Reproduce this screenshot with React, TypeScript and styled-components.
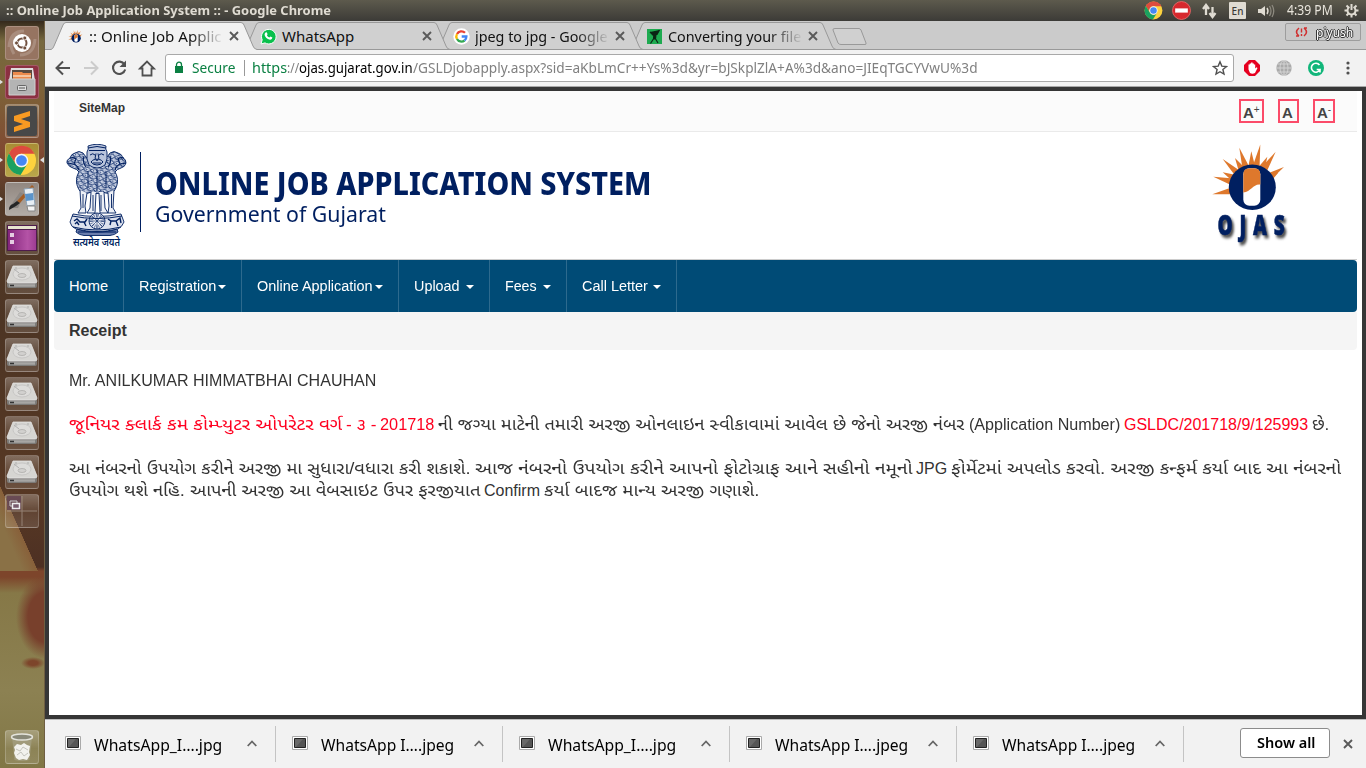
import React, { useLayoutEffect, useRef, useState } from 'react';
import styled, { createGlobalStyle } from 'styled-components';

const GlobalStyle = createGlobalStyle`
  * { box-sizing: border-box; }
  body { margin: 0; background: #fff; overflow: hidden; }
  svg { display: block; flex: none; }
`;

const uiFont = `'Noto Sans', 'Open Sans', sans-serif`;
const pageFont = `'Liberation Sans', 'Noto Sans Gujarati', 'Lohit Gujarati', sans-serif`;
const navy = '#001f60';

/* Text condensed or stretched to a fixed width */
const FitBox = styled.span<{ $w: number }>`
  display: inline-block;
  flex: none;
  width: ${p => p.$w}px;
  white-space: pre;
`;
const FitInner = styled.span`
  display: inline-block;
  transform-origin: 0 50%;
`;
function Fit({ w, children }: { w: number; children: React.ReactNode }) {
  const ref = useRef<HTMLSpanElement>(null);
  const [scale, setScale] = useState(1);
  useLayoutEffect(() => {
    if (ref.current) setScale(w / ref.current.offsetWidth);
  }, [w]);
  return (
    <FitBox $w={w}>
      <FitInner ref={ref} style={{ transform: `scaleX(${scale})` }}>{children}</FitInner>
    </FitBox>
  );
}

const Screen = styled.div`
  width: 1366px;
  height: 768px;
  display: flex;
  flex-direction: column;
  overflow: hidden;
  font-family: ${uiFont};
`;
const Panel = styled.header`
  height: 21px;
  flex: none;
  display: flex;
  align-items: center;
  justify-content: space-between;
  padding: 0 7px 0 6px;
  color: #dfdbd2;
  background: linear-gradient(#5d5a4d, #3c3b37);
`;
const PanelTitle = styled.div`
  font-size: 12.5px;
  line-height: 20px;
  font-weight: 700;
`;
const Indicators = styled.div`
  display: flex;
  align-items: center;
  font-size: 13.5px;
  line-height: 20px;
`;
const Slot = styled.span<{ $ml?: number }>`
  display: flex;
  margin-left: ${p => p.$ml ?? 0}px;
`;
const Clock = styled.span`
  margin: 0 11px 2px 12px;
  color: #e8e4db;
`;
const Lang = styled.span`
  width: 17px;
  height: 17px;
  margin-left: 11px;
  border-radius: 1px;
  background: #dfdbd2;
  color: #3c3b37;
  font-size: 10px;
  line-height: 18px;
  font-weight: 500;
  text-align: center;
`;
const Desktop = styled.div`
  flex: 1;
  display: flex;
  min-height: 0;
`;

const Launcher = styled.aside`
  width: 45px;
  flex: none;
  display: flex;
  flex-direction: column;
  align-items: center;
  gap: 5px;
  padding: 5px 1px 4px 0;
  border-right: 1px solid #6f5f42;
  background:
    radial-gradient(ellipse 12px 6px at 33px 642px, #7d452b 40%, transparent) no-repeat,
    radial-gradient(ellipse 30px 42px at 46px 596px, #78402c 60%, transparent 100%) no-repeat,
    linear-gradient(66deg, #8a7146 0 30%, #88603a 50%, transparent 50.5%) 0 466px / 38px 84px no-repeat,
    linear-gradient(#35291c 0, #76683e 20px, #7d6238 70px, #804a32 130px, #543a27 175px, #4d3524 300px, #573824 480px, #4d3023 546px, #7d452b 550px, #7d452b 556px, #867847 572px, #8c8152 670px, #817746 747px);
`;
const Tile = styled.div<{ $bg?: string; $last?: boolean }>`
  width: 34px;
  height: 34px;
  flex: none;
  display: flex;
  align-items: center;
  justify-content: center;
  position: relative;
  margin-top: ${p => (p.$last ? 'auto' : 0)};
  border: 1px solid rgba(255, 255, 255, 0.2);
  border-radius: 3px;
  background: ${p => p.$bg ?? 'linear-gradient(rgba(255,255,255,.27), rgba(255,255,255,.07) 55%, rgba(255,255,255,.13))'};
`;
const Pip = styled.i<{ $right?: boolean }>`
  position: absolute;
  top: 13px;
  ${p => (p.$right ? 'right: -6px; border-right: 4px solid #ddd;' : 'left: -7px; border-left: 4px solid #ddd;')}
  border-top: 3px solid transparent;
  border-bottom: 3px solid transparent;
`;

const Browser = styled.main`
  flex: 1;
  min-width: 0;
  display: flex;
  flex-direction: column;
`;
const TabStrip = styled.div`
  height: 29px;
  flex: none;
  display: flex;
  padding: 1px 5px 0 6px;
  background: linear-gradient(#999, #999) 0 28px / 100% 1px no-repeat, #cbcbcb;
`;
const TabBox = styled.div<{ $z: number }>`
  position: relative;
  z-index: ${p => p.$z};
  width: 206px;
  height: 28px;
  margin-right: -13px;
  flex: none;
  display: flex;
  align-items: center;
  padding: 0 16px 0 16px;
`;
const TabShape = styled.svg`
  position: absolute;
  left: 0;
  top: 0;
  z-index: -1;
`;
const TabIcon = styled.span`
  width: 17px;
  display: flex;
  justify-content: center;
`;
const TabTitle = styled.div<{ $faded?: boolean }>`
  width: 135px;
  margin: 0 0 1px 5px;
  font-size: 15px;
  line-height: 22px;
  color: #111;
  ${p => p.$faded && 'mask-image: linear-gradient(90deg, #000 75%, transparent);'}
`;
const NewTab = styled.div`
  margin: 6px 0 0 9px;
`;
const Profile = styled.div`
  width: 76px;
  height: 18px;
  margin: 1px 0 0 auto;
  display: flex;
  align-items: center;
  justify-content: space-between;
  padding: 0 7px 0 9px;
  border: 1px solid #9d9d9d;
  border-radius: 2px;
  background: #c8c8c8;
  color: #fff;
  font-size: 13px;
  line-height: 15px;
  text-shadow: 0 1px #333, 1px 0 #333, -1px 0 #333, 0 -1px #333;
`;
const Toolbar = styled.div`
  height: 37px;
  flex: none;
  display: flex;
  align-items: center;
  padding: 0 10px 1px 8px;
  border-bottom: 1px solid #a8a8a8;
  background: #f2f2f2;
`;
const NavIcons = styled.div`
  display: flex;
  gap: 8px;
  width: 112px;
`;
const Omnibox = styled.div`
  width: 1069px;
  height: 28px;
  display: flex;
  align-items: center;
  padding: 0 5px 0 8px;
  border: 1px solid #a9a9a9;
  border-radius: 3px;
  background: #fff;
  color: #808080;
  font-size: 14px;
  line-height: 24px;
`;
const Green = styled.span`color: #0b8043;`;
const Host = styled.span`color: #000;`;
const Divider = styled.i`
  width: 1px;
  height: 16px;
  margin: 0 7px 0 9px;
  background: #999;
`;
const Extensions = styled.div`
  display: flex;
  align-items: center;
  gap: 16px;
  margin-left: 10px;
`;

const Viewport = styled.div`
  flex: 1;
  min-height: 0;
  display: flex;
  flex-direction: column;
  padding: 0 5px;
  border: 4px solid #363636;
  background: #fff;
  font-family: ${pageFont};
  color: #333;
`;
const UtilityBar = styled.div`
  height: 41px;
  flex: none;
  display: flex;
  justify-content: space-between;
  padding: 8px 22px 0 25px;
  border-bottom: 1px solid #eaeaea;
  background: #fbfbfb;
`;
const SiteMap = styled.a`
  font-size: 12px;
  line-height: 18px;
  font-weight: 700;
`;
const Sizes = styled.div`
  display: flex;
  gap: 14px;
`;
const SizeButton = styled.a<{ $w: number }>`
  width: ${p => p.$w}px;
  height: 24px;
  padding-left: 2px;
  border: 2px solid #fb4b69;
  font-size: 15px;
  line-height: 24px;
  font-weight: 700;
  color: #444;
  display: flex;
`;
const Sup = styled.span`
  font-size: 10px;
  line-height: 17px;
  font-weight: 400;
`;
const Banner = styled.div`
  height: 128px;
  flex: none;
  display: flex;
  padding: 12px 62px 0 11px;
  border-bottom: 1px solid #ccc;
`;
const BrandRule = styled.i`
  width: 1px;
  height: 80px;
  margin: 8px 14px 0 12px;
  background: ${navy};
`;
const BrandText = styled.div`
  flex: 1;
  padding-top: 20px;
  color: ${navy};
  font-family: ${uiFont};
`;
const BrandName = styled.div`
  font-size: 32px;
  line-height: 38px;
  font-weight: 800;
`;
const BrandSub = styled.div`
  font-size: 22.5px;
  line-height: 24px;
`;
const Menu = styled.nav`
  height: 52px;
  flex: none;
  display: flex;
  border-radius: 4px;
  background: #004b76;
`;
const MenuItem = styled.a<{ $w: number }>`
  width: ${p => p.$w}px;
  height: 52px;
  display: flex;
  align-items: center;
  padding-left: 15px;
  border-right: 1px solid #2d6a8e;
  color: #fff;
  font-size: 14.7px;
`;
const Caret = styled.i<{ $gap: number }>`
  margin: 2px 0 0 ${p => p.$gap}px;
  border-top: 4px solid #fff;
  border-left: 4px solid transparent;
  border-right: 4px solid transparent;
`;
const Heading = styled.h1`
  height: 38px;
  flex: none;
  margin: 0;
  padding-left: 15px;
  border-radius: 0 0 4px 4px;
  background: #f5f5f5;
  font-size: 16px;
  line-height: 37px;
`;
const Receipt = styled.section`
  padding: 20px 0 0 15px;
  font-size: 16px;
`;
const Line = styled.div<{ $gap?: boolean }>`
  height: 22px;
  margin-bottom: ${p => (p.$gap ? 22 : 0)}px;
  line-height: 22px;
  display: flex;
  gap: 4px;
`;
const Red = styled.span`
  display: flex;
  gap: 4px;
  color: #ff0020;
`;

const Downloads = styled.footer`
  height: 49px;
  flex: none;
  display: flex;
  align-items: center;
  padding: 0 13px 0 4px;
  border-top: 1px solid #bcbcbc;
  background: #f2f2f2;
  color: #000;
`;
const Download = styled.div`
  width: 227px;
  height: 36px;
  display: flex;
  align-items: center;
  padding: 0 0 2px 16px;
  border-right: 1px solid #c4c4c4;
  font-size: 15.5px;
  line-height: 22px;
`;
const FileName = styled.div`
  width: 153px;
  margin: 3px 0 0 13px;
`;
const ShowAll = styled.button`
  width: 90px;
  height: 30px;
  margin: 0 0 2px auto;
  padding: 0;
  border: 1px solid #8c8c8c;
  border-radius: 3px;
  background: #fff;
  color: #000;
  font: 600 14px/26px ${uiFont};
`;

const Cross = ({ s = 10, c = '#5a5a5a' }) => (
  <svg width={s} height={s} viewBox="0 0 10 10"><path d="M1 1l8 8M9 1L1 9" stroke={c} strokeWidth="1.900" /></svg>
);

const Chrome = ({ s }: { s: number }) => (
  <svg width={s} height={s} viewBox="0 0 32 32">
    <circle cx="16" cy="16" r="15" fill="#fdd23e" />
    <path d="M3 8.500A15 15 0 0 1 29.500 9L16 9A7 7 0 0 0 9.800 19.500z" fill="#dd4b3e" />
    <path d="M3 8.500A15 15 0 0 0 15 31L22 19.600A7 7 0 0 1 9.900 19.500z" fill="#1aa160" />
    <circle cx="16" cy="16" r="7" fill="#f4f4f4" />
    <circle cx="16" cy="16" r="5.500" fill="#4587f3" />
  </svg>
);

/* Ray tips around the sun disc, centred on (41.3, 43.3) */
const rayTips = [[1.3, 50.3], [2.3, 32.7], [11.7, 28.3], [11.7, 15], [24, 14], [28.3, 3.7], [40.3, 7.3], [49.3, 0.5], [64.7, 7.7], [56.3, 12.7], [73, 23], [67, 29]];
const rayPath = ([x, y]: number[]) => {
  const dx = x - 41.3, dy = y - 43.3, d = Math.hypot(dx, dy);
  const ux = dx / d, uy = dy / d, bx = 41.3 + ux * 20, by = 43.3 + uy * 20, h = 3.6;
  return `M${bx - uy * h} ${by + ux * h}L${x} ${y}L${bx + uy * h} ${by - ux * h}z`;
};
const SunMark = () => (
  <>
    {rayTips.map((t, i) => <path key={i} d={rayPath(t)} fill="#de782c" />)}
    <ellipse cx="41.300" cy="43.300" rx="23.500" ry="22.700" fill={navy} />
    <rect x="32.300" y="24.300" width="17" height="37.400" rx="6" fill="#fff" />
    <path d="M32.300 48.500V30.300q0-6 6-6h5q6 0 6 6v10.200c-7-1-9 7-17 8z" fill="#de782c" />
  </>
);
const Sun = ({ s }: { s: number }) => (
  <svg width={s} height={s} viewBox="0 -3 76 76"><SunMark /></svg>
);

const OjasText = styled.text`
  font: 800 28px 'Open Sans', sans-serif;
  filter: drop-shadow(3px 3px 1.5px rgba(0, 0, 0, 0.7));
`;
const OjasLogo = () => (
  <svg width="84" height="108" viewBox="0 0 84 108">
    <SunMark />
    <OjasText transform="translate(6.500 90.500) scale(.68 1)" fill={navy} stroke={navy} strokeWidth=".6" textLength="99">OJAS</OjasText>
  </svg>
);

const Emblem = () => (
  <svg width="62" height="112" viewBox="0 0 62 112">
    <defs>
      <pattern id="mane" width="7" height="6" patternUnits="userSpaceOnUse" patternTransform="rotate(12)">
        <rect width="7" height="6" fill="#d3daea" />
        <path d="M0 1q2 2 3.500 0t3.500 0M0 4q1.500-2 3 0t4 0M1 2.500l1.500 1M5 2l-1 1.500M2 5.500l1-1M6 5.500l-1-1" fill="none" stroke={navy} strokeWidth=".9" />
      </pattern>
    </defs>
    <g stroke={navy} strokeWidth=".9" fill="url(#mane)">
      <path d="M17 9q-4-3-8 0q-4 1-5 5q-4 2-3 5q2 4 6 5q4 1 6 4c-4 6-3 14 1 19q6 4 11 1q6 3 12 0q6 3 11-1c4-5 5-13 1-19q2-3 6-4q4-1 5-5q0-4-3-5q-1-4-5-5q-4-3-8 0q-3 5-6 6H23q-3-1-6-6z" />
      <path d="M22 2q9-3.500 18 0q-1 3 1 6q1 7-2 13q-8 6-16 0q-3-6-2-13q2-3 1-6z" fill="#bac5dc" />
      <path d="M14 46l1 18-3 5h8l-1-7 2-13M25 48l-1 16-3 5h8l1-20h3l1 20h8l-3-5-1-16M42 49l1 13-1 7h8l-3-5 1-18" fill="#edf0f6" />
      <path d="M7 70q24 5 48 0l3 8q-2 5-6 7q-21 5-42 0q-5-2-6-7z" fill="#dce1ed" />
      <path d="M11 85c9 4 31 4 40 0l1 3q-3 3-8 3.500H18q-5-.5-8-3.500z" fill="#697cab" />
      <circle cx="31" cy="77" r="8" fill="#f3f5fa" />
    </g>
    <g fill="none" stroke={navy}>
      <path d="M22 4q9-3 18 0M23 6.500h16M24 11q3-2.500 5 0M33 11q2-2.500 5 0M30 9.500l-1 5 2 1 2-1-1-5M25 18q3-4 6-1.500q3-2.500 6 1.500q-2 3-6 3t-6-3M27 19h8" strokeWidth="1" />
      <path d="M2 19l5 1M4 14q4-1 6 1l-2 5q4 2 5 6M60 19l-5 1M58 14q-4-1-6 1l2 5q-4 2-5 6M18 12q-2 6 2 11M44 12q2 6-2 11" strokeWidth="1.100" />
      <path d="M17 50v14M45.500 50v14M27 51v16M35 51v16M22 27v17M40 27v17M31 25v22" strokeWidth=".9" />
      <path d="M6 72q25 5 50 0M7 83q24 6 48 0M12 88h38" strokeWidth="1" />
      <path d="M8 77l3-2 3 3h5l2-3M9 80l2-2 2 3M18 78l2 4M42 75l3 2h5l4-3 1 5M44 81l1-4M50 77l2 5" strokeWidth="1.400" />
      <circle cx="31" cy="77" r="5.500" strokeDasharray="1 1" strokeWidth="3.500" opacity=".55" />
      <path d="M31 69v16M23 77h16M25.500 71.500l11 11M36.500 71.500l-11 11" strokeWidth=".6" />
    </g>
    <text x="7" y="102" fontSize="10.500" fontWeight="600" fill={navy} textLength="47" lengthAdjust="spacingAndGlyphs" fontFamily="'Noto Sans Devanagari', 'Lohit Devanagari', sans-serif">सत्यमेव जयते</text>
  </svg>
);

const HardDisk = () => (
  <svg width="32" height="26" viewBox="0 0 32 26">
    <path d="M7 3h18l6 15v4q0 2-2 2H3q-2 0-2-2v-4z" fill="#7d7b78" />
    <path d="M7 2h18l6 15q0 2-2 2H3q-2 0-2-2z" fill="#d6d5d2" stroke="#e6e5e3" strokeWidth=".8" />
    <ellipse cx="16" cy="10" rx="9" ry="6" fill="#dddcda" stroke="#c3c2c0" strokeWidth=".8" />
    <ellipse cx="16" cy="11.500" rx="4" ry="2" fill="#d2d1cf" stroke="#aeadab" strokeWidth=".8" />
    <path d="M8 5l5 4M9 4h2M21 4h2" stroke="#aaa" strokeWidth=".9" />
    <path d="M3 21.500h26" stroke="#a7a6a4" strokeWidth="2.500" />
    <path d="M4 21.500h4" stroke="#333" strokeWidth="1.500" />
  </svg>
);

const UbuntuIcon = () => (
  <svg width="32" height="32" viewBox="0 0 32 32">
    <path d="M3 20Q4 4 18 4M8 27Q0 14 14 7M29 12Q28 28 14 28" fill="none" stroke="#fff" strokeWidth="3" opacity=".18" />
    <circle cx="16" cy="16" r="9" fill="#fff" />
    <circle cx="16" cy="16" r="4.500" fill="none" stroke="#70503f" strokeWidth="2" />
    <g fill="#70503f" stroke="#fff" strokeWidth=".8"><circle cx="10.500" cy="16" r="2" /><circle cx="18.800" cy="11" r="2" /><circle cx="18.800" cy="21" r="2" /></g>
  </svg>
);
const FilesIcon = () => (
  <svg width="28" height="30" viewBox="0 0 28 30">
    <path d="M3 1h22l2 13H1z" fill="#dedede" /><path d="M4 3h20v10H4z" fill="#59493f" />
    <path d="M5 5h9l1 1h8v8H5z" fill="#ed8a4c" /><path d="M5 8h18v2H5z" fill="#f5c49f" />
    <path d="M1 12h26v16H1z" fill="#b4b4b4" stroke="#d0d0d0" />
    <rect x="9.500" y="18.500" width="9" height="5" rx="1" fill="#ddd" stroke="#666" /><path d="M11 21h6" stroke="#555" />
  </svg>
);
const SublimeIcon = () => (
  <svg width="30" height="30" viewBox="0 0 30 30">
    <rect width="30" height="30" rx="2" fill="#484848" />
    <path d="M7 10l16-5v5l-9 3 9 3v5L7 26v-5l9-3-9-3z" fill="#f89a22" />
  </svg>
);
const PaintIcon = () => (
  <svg width="32" height="32" viewBox="0 0 32 32">
    <path d="M3 25l11-16 4 2-6 14z" fill="#8b8682" />
    <path d="M26 2l2 2-14 16-3-2z" fill="#a45d25" /><path d="M11 18l3 2-4 3-7 4q0-5 4-6z" fill="#252525" />
    <path d="M18 6l9-1 2 17-8 1z" fill="#e8eef4" stroke="#8ea2b4" /><path d="M19 11l8-1 .7 7-7.700 1z" fill="#5b94ca" /><path d="M21 23h8v5h-7z" fill="#f4f4f4" stroke="#888" />
  </svg>
);
const WindowIcon = () => (
  <svg width="30" height="26" viewBox="0 0 30 26">
    <defs><linearGradient id="plum" x2="1"><stop stopColor="#84267c" /><stop offset=".7" stopColor="#b453a6" /><stop offset="1" stopColor="#9d3c92" /></linearGradient></defs>
    <rect width="30" height="26" fill="#4e1b4d" /><path d="M1 1h28v3H1z" fill="#e7e3cf" /><path d="M1 5h28v20H1z" fill="url(#plum)" />
    <path d="M3 8h4v4H3zM3 15h4v4H3z" fill="#e5cde1" />
  </svg>
);
const WorkspaceIcon = () => (
  <svg width="32" height="32" viewBox="0 0 32 32">
    <path d="M1 1h14v14H1z" fill="#644452" opacity=".8" /><path d="M16 1v30M1 16h30" stroke="#b5a79c" opacity=".6" />
    <path d="M4 6h7v5H4z" fill="none" stroke="#ccc" /><path d="M6.500 8.500h7v5h-7z" fill="#775b6c" stroke="#eee" strokeWidth="1.500" />
  </svg>
);
const TrashIcon = () => (
  <svg width="26" height="30" viewBox="0 0 26 30">
    <path d="M3 5h20l-2.500 23q-7.500 2-15 0z" fill="#a5a184" opacity=".7" />
    <path d="M5 15l3-3 4 1 3-2 3 2 3 1-1 6 1 3-3 5-4-1-4 1-3-2-2-5 1-3z" fill="#f2f2ed" /><path d="M7 17l4 2 3-4 5 3M8 23l4-3 3 4 4-3" fill="none" stroke="#c4c4bc" />
    <ellipse cx="13" cy="5" rx="10.500" ry="3" fill="#898979" stroke="#e4e4dc" strokeWidth="1.500" />
  </svg>
);

const WhatsApp = () => (
  <svg width="17" height="17" viewBox="0 0 17 17">
    <path d="M1 16l1.200-4.200A7.300 7.300 0 1 1 5 14.900z" fill="#09c04c" stroke="#fff" />
    <path d="M5.500 4.500l1.200-.2.900 2-.7 1q.8 1.600 2.500 2.300l1-1 2 1q-.2 2-2 2.100C7 11.400 4.500 8.500 4.600 6z" fill="#fff" />
  </svg>
);
const Google = () => (
  <svg width="17" height="17" viewBox="0 0 17 17">
    <circle cx="8.500" cy="8.500" r="8.200" fill="#fff" />
    <g fill="none" strokeWidth="2.300">
      <path d="M12 4.800A5 5 0 0 0 4 6" stroke="#ea4335" /><path d="M4 6a5 5 0 0 0 0 5" stroke="#fbbc05" />
      <path d="M4 11a5 5 0 0 0 7.500 1.500" stroke="#34a853" /><path d="M11.500 12.500a5 5 0 0 0 1.900-4H8.700" stroke="#4285f4" />
    </g>
  </svg>
);
const Runner = () => (
  <svg width="15" height="15" viewBox="0 0 15 15">
    <path d="M0 0h15v15H0z" fill="#1eaa50" /><circle cx="8.500" cy="3.500" r="1.300" fill="#0b2415" />
    <path d="M3 3l3 3 4-.5L12.500 1M7 5h2l-.5 5H6.500zM8 9l3 5M7 9l-3.500 5.500" stroke="#0b2415" strokeWidth="1.200" fill="#0b2415" />
  </svg>
);

type TabProps = { icon: React.ReactNode; title: string; w: number; faded?: boolean; active?: boolean; z: number };
const Tab = ({ icon, title, w, faded, active, z }: TabProps) => (
  <TabBox $z={z}>
    <TabShape width="206" height="28" viewBox="0 0 206 28">
      <path d="M0 27.500Q2 27 3 24L12 3Q13 .5 15 .5H190Q192 .5 193 3L202 24Q203 27 206 27.500V28H0z" fill={active ? '#f2f2f2' : '#d0d0d0'} />
      <path d="M0 27.500Q2 27 3 24L12 3Q13 .5 15 .5H190Q192 .5 193 3L202 24Q203 27 206 27.500" fill="none" stroke="#999" />
      {!active && <path d="M0 27.500H206" stroke="#999" />}
    </TabShape>
    <TabIcon>{icon}</TabIcon>
    <TabTitle $faded={faded}><Fit w={w}>{title}</Fit></TabTitle>
    <Slot $ml={5}><Cross /></Slot>
  </TabBox>
);

const files: [string, number][] = [['WhatsApp_I….jpg', 128], ['WhatsApp I….jpeg', 133], ['WhatsApp_I….jpg', 128], ['WhatsApp I….jpeg', 133], ['WhatsApp I….jpeg', 133]];
const menu: [string, number, number, number][] = [['Home', 70, 39, -1], ['Registration', 118, 77, 1.5], ['Online Application', 157, 116, 1.5], ['Upload', 91, 46, 5.5], ['Fees', 77, 32, 5.5], ['Call Letter', 110, 66, 5]];

export default function App() {
  return (
    <Screen>
      <GlobalStyle />
      <Panel>
        <PanelTitle><Fit w={325}>:: Online Job Application System :: - Google Chrome</Fit></PanelTitle>
        <Indicators>
          <Chrome s={19} />
          <Slot $ml={9}>
            <svg width="19" height="19" viewBox="0 0 18 18"><circle cx="9" cy="9" r="8.500" fill="#d7282d" stroke="#ef6a6a" strokeWidth=".8" /><path d="M3 7h12v4H3z" fill="#fff" /></svg>
          </Slot>
          <Slot $ml={10}>
            <svg width="17" height="16" viewBox="0 0 17 16"><path d="M5 12V3M2 6l3-4 3 4M11.500 4v9M8.500 10l3 4 3-4" fill="none" stroke="#dfdbd2" strokeWidth="2.300" /></svg>
          </Slot>
          <Lang>En</Lang>
          <Slot $ml={11}>
            <svg width="18" height="16" viewBox="0 0 18 16"><path d="M1 6h3l4-3v10l-4-3H1z" fill="#dfdbd2" /><path d="M10 5q2 3 0 6" fill="none" stroke="#dfdbd2" strokeWidth="1.400" /><path d="M12.500 3q3 5 0 10M15 2q3.500 6 0 12" fill="none" stroke="#8c897f" strokeWidth="1.300" /></svg>
          </Slot>
          <Clock><Fit w={46}>4:39 PM</Fit></Clock>
          <svg width="15" height="15" viewBox="0 0 15 15"><g fill="none" stroke="#dfdbd2"><path d="M5.500 4a4 4 0 1 0 4 0" strokeWidth="2" /><path d="M7.500 1v6M.5 7.500h3M11.500 7.500h3M2.500 12.500l2-2M10.500 10.500l2 2M7.500 11.500v3M2.500 2.500l2 2M12.500 2.500l-2 2" strokeWidth="2" /></g></svg>
        </Indicators>
      </Panel>
      <Desktop>
        <Launcher>
          <Tile $bg="#967461"><UbuntuIcon /></Tile>
          <Tile $bg="#8c3042"><Pip /><FilesIcon /></Tile>
          <Tile><SublimeIcon /></Tile>
          <Tile $bg="linear-gradient(#a98d35, #b8a64a)"><Pip /><Pip $right /><Chrome s={31} /></Tile>
          <Tile $bg="linear-gradient(#918780, #b2aca6)"><Pip /><PaintIcon /></Tile>
          <Tile><WindowIcon /></Tile>
          {[0, 1, 2, 3, 4, 5].map(i => <Tile key={i}><HardDisk /></Tile>)}
          <Tile><WorkspaceIcon /></Tile>
          <Tile $last><TrashIcon /></Tile>
        </Launcher>
        <Browser>
          <TabStrip>
            <Tab z={5} active faded icon={<Sun s={15} />} title=":: Online Job Applic" w={133} />
            <Tab z={4} icon={<WhatsApp />} title="WhatsApp" w={72} />
            <Tab z={3} faded icon={<Google />} title="jpeg to jpg - Google" w={133} />
            <Tab z={2} faded icon={<Runner />} title="Converting your file" w={133} />
            <NewTab>
              <svg width="35" height="18" viewBox="0 0 35 18"><path d="M3 .5H27Q28 .5 29 2L34 15Q34.500 16.500 33 16.500H9Q7 16.500 6 15L1 2Q.5 .5 3 .5z" fill="#d0d0d0" stroke="#999" /></svg>
            </NewTab>
            <Profile>
              <svg width="13" height="12" viewBox="0 0 13 12"><path d="M4 2Q-1 6 4 10M4 10H1M9 10q5-4 0-8M9 2h3" fill="none" stroke="#d02f2f" strokeWidth="1.600" /><path d="M6.500 2.500v4M6.500 8v2" stroke="#d02f2f" strokeWidth="1.400" /></svg>
              <Fit w={37}>piyush</Fit>
            </Profile>
          </TabStrip>
          <Toolbar>
            <NavIcons>
              <svg width="20" height="20" viewBox="0 0 20 20"><path d="M17 10H4M10 3.500L3.500 10l6.500 6.500" fill="none" stroke="#505050" strokeWidth="2" /></svg>
              <svg width="20" height="20" viewBox="0 0 20 20"><path d="M3 10h13M10 3.500l6.500 6.500-6.500 6.500" fill="none" stroke="#ccc" strokeWidth="2" /></svg>
              <svg width="20" height="20" viewBox="0 0 20 20"><path d="M15.500 6.500A6.200 6.200 0 1 0 16.200 11.500" fill="none" stroke="#505050" strokeWidth="2.100" /><path d="M17 2.500v6.500h-6.500z" fill="#505050" /></svg>
              <svg width="20" height="20" viewBox="0 0 20 20"><path d="M3 10.500L10 3.500l7 7H14.500v7h-9v-7z" fill="none" stroke="#505050" strokeWidth="1.800" /></svg>
            </NavIcons>
            <Omnibox>
              <svg width="10" height="13" viewBox="0 0 10 13"><path d="M1 5h8v7H1z" fill="#0b8043" /><path d="M2.500 5.500V3.700a2.500 2.500 0 0 1 5 0v1.800" fill="none" stroke="#0b8043" strokeWidth="1.300" /></svg>
              <Slot $ml={8}><Green><Fit w={43}>Secure</Fit></Green></Slot>
              <Divider />
              <Green><Fit w={35}>https</Fit></Green>
              <Fit w={12}>://</Fit>
              <Host><Fit w={114}>ojas.gujarat.gov.in</Fit></Host>
              <Fit w={565}>/GSLDjobapply.aspx?sid=aKbLmCr++Ys%3d&amp;yr=bJSkplZlA+A%3d&amp;ano=JIEqTGCYVwU%3d</Fit>
              <Slot $ml={234}>
                <svg width="16" height="16" viewBox="0 0 16 16"><path d="M8 1.800l1.800 4.300 4.700.4-3.600 3 1.100 4.600L8 11.700l-4 2.400 1.100-4.600-3.600-3 4.700-.4z" fill="none" stroke="#505050" strokeWidth="1.400" /></svg>
              </Slot>
            </Omnibox>
            <Extensions>
              <svg width="16" height="16" viewBox="0 0 16 16"><path d="M5 0h6l5 5v6l-5 5H5l-5-5V5z" fill="#e60020" /><path d="M4.500 8V4.500h1.200V3.500h1.400v-1h1.500v1h1.300v1h1.300v4l1.300-1.200 1 .7-2.500 5q-2.700 1.500-5 0L4.500 9.500z" fill="#fff" /></svg>
              <svg width="16" height="16" viewBox="0 0 16 16"><circle cx="8" cy="8" r="7.700" fill="#aaa" /><path d="M8 0v16M0 8h16M1.500 4h13M1.500 12h13" stroke="#d2d2d2" /><ellipse cx="8" cy="8" rx="4" ry="7.500" fill="none" stroke="#d2d2d2" /></svg>
              <svg width="16" height="16" viewBox="0 0 16 16"><circle cx="8" cy="8" r="8" fill="#11b67a" /><path d="M11.500 5A4.500 4.500 0 1 0 12 9.500H8.700M12 9.500v3" fill="none" stroke="#fff" strokeWidth="1.600" /></svg>
              <svg width="16" height="16" viewBox="0 0 16 16"><g fill="#505050"><circle cx="8" cy="3" r="1.600" /><circle cx="8" cy="8" r="1.600" /><circle cx="8" cy="13" r="1.600" /></g></svg>
            </Extensions>
          </Toolbar>
          <Viewport>
            <UtilityBar>
              <SiteMap>SiteMap</SiteMap>
              <Sizes>
                <SizeButton $w={25}>A<Sup>+</Sup></SizeButton>
                <SizeButton $w={21}>A</SizeButton>
                <SizeButton $w={22}>A<Sup>-</Sup></SizeButton>
              </Sizes>
            </UtilityBar>
            <Banner>
              <Slot $ml={1}><Emblem /></Slot>
              <BrandRule />
              <BrandText>
                <BrandName><Fit w={496}>ONLINE JOB APPLICATION SYSTEM</Fit></BrandName>
                <BrandSub><Fit w={231}>Government of Gujarat</Fit></BrandSub>
              </BrandText>
              <OjasLogo />
            </Banner>
            <Menu>
              {menu.map(([label, w, textW, gap]) => (
                <MenuItem key={label} $w={w}><Fit w={textW}>{label}</Fit>{gap >= 0 && <Caret $gap={gap} />}</MenuItem>
              ))}
            </Menu>
            <Heading>Receipt</Heading>
            <Receipt>
              <Line $gap><Fit w={307}>Mr. ANILKUMAR HIMMATBHAI CHAUHAN</Fit></Line>
              <Line $gap>
                <Red>
                  <Fit w={273}>જૂનિયર ક્લાર્ક કમ કોમ્પ્યુટર ઓપરેટર વર્ગ</Fit>
                  <Fit w={30}>- ૩ -</Fit>
                  <Fit w={54}>201718</Fit>
                </Red>
                <Fit w={527}>ની જગ્યા માટેની તમારી અરજી ઓનલાઇન સ્વીકાવામાં આવેલ છે જેનો અરજી નંબર</Fit>
                <Fit w={151}>(Application Number)</Fit>
                <Red><Fit w={184}>GSLDC/201718/9/125993</Fit></Red>
                <Fit w={17}>છે.</Fit>
              </Line>
              <Line>
                <Fit w={402}>આ નંબરનો ઉપયોગ કરીને અરજી મા સુધારા/વધારા કરી શકાશે.</Fit>
                <Fit w={437}>આજ નંબરનો ઉપયોગ કરીને આપનો ફોટોગ્રાફ આને સહીનો નમૂનો</Fit>
                <Fit w={31}>JPG</Fit>
                <Fit w={390}>ફોર્મેટમાં અપલોડ કરવો. અરજી કન્ફર્મ કર્યા બાદ આ નંબરનો</Fit>
              </Line>
              <Line>
                <Fit w={411}>ઉપયોગ થશે નહિ. આપની અરજી આ વેબસાઇટ ઉપર ફરજીયાત</Fit>
                <Fit w={56}>Confirm</Fit>
                <Fit w={215}>કર્યા બાદજ માન્ય અરજી ગણાશે.</Fit>
              </Line>
            </Receipt>
          </Viewport>
          <Downloads>
            {files.map(([name, w], i) => (
              <Download key={i}>
                <svg width="16" height="14" viewBox="0 0 16 14"><path d="M.5.5h15v13H.5z" fill="#fff" stroke="#aaa" /><path d="M2.500 2.500h11v9h-11z" fill="#555" stroke="#222" /><path d="M3 3h8l-7 8H3z" fill="#777" opacity=".6" /></svg>
                <FileName><Fit w={w}>{name}</Fit></FileName>
                <svg width="10" height="7" viewBox="0 0 10 7"><path d="M.7 6L5 1.500 9.300 6" fill="none" stroke="#666" strokeWidth="1.800" /></svg>
              </Download>
            ))}
            <ShowAll><Fit w={58}>Show all</Fit></ShowAll>
            <Slot $ml={13}><Cross /></Slot>
          </Downloads>
        </Browser>
      </Desktop>
    </Screen>
  );
}
